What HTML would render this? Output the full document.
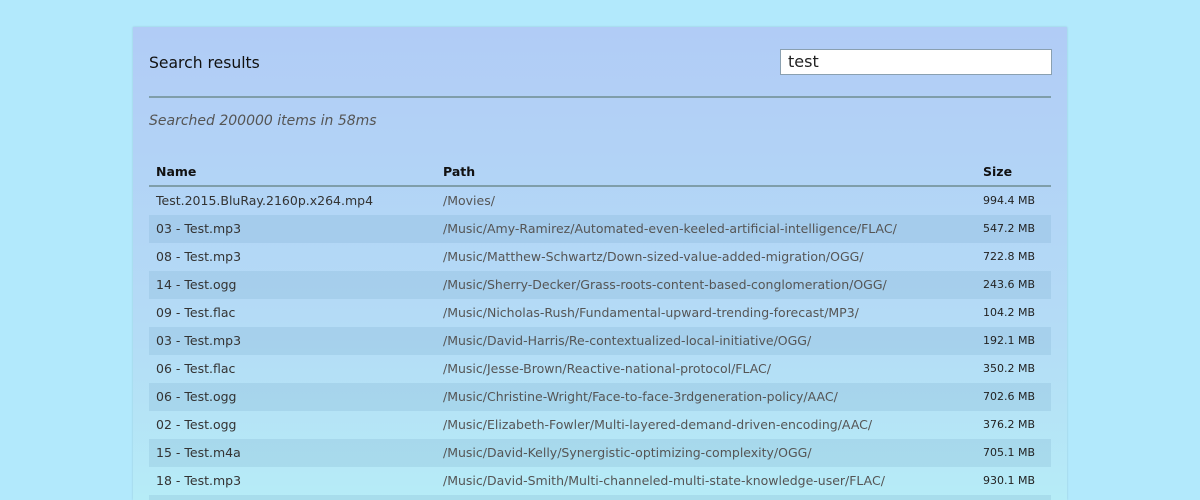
<!DOCTYPE html>
<html><head><style>
html,body{margin:0;padding:0;width:1200px;height:500px;overflow:hidden;}
body{background:#b2e9fc;font-family:"DejaVu Sans","Liberation Sans",sans-serif;color:#222;position:relative;}
.panel{position:absolute;left:133px;top:27px;width:934px;height:473px;background:linear-gradient(180deg,#b1ccf6 0%,#b4dcf6 65%,#b6ecf7 100%);box-shadow:0 0 2px rgba(0,0,0,.15);overflow:hidden;}
.title{position:absolute;left:16px;top:27px;font-size:15.6px;color:#111;}
.inp{position:absolute;left:647px;top:22px;background:#fff;border:1px solid #8aa0b0;font-size:16px;line-height:24px;padding-left:7px;box-sizing:border-box;width:272px;height:26px;}
.hr{position:absolute;left:16px;top:69px;width:902px;height:2px;background:#7f9eaa;}
.stat{position:absolute;left:16px;top:86px;font-size:14px;font-style:italic;color:#555;}
table{position:absolute;left:16px;top:130px;width:902px;border-collapse:collapse;font-size:12.5px;table-layout:fixed;}
th{text-align:left;font-weight:bold;height:27px;line-height:27px;padding:1px 0 0 7px;border-bottom:2px solid #7f9eaa;color:#111;box-sizing:border-box;}
td{height:28px;line-height:28px;padding:0 0 0 7px;color:#333;box-sizing:border-box;white-space:nowrap;overflow:hidden;}
td.p{color:#555;}
td.s{font-size:11px;color:#222;}
tr.d td{background:rgba(120,170,200,.22);}
</style></head><body>
<div class="panel">
<div class="title">Search results</div>
<div class="inp">test</div>
<div class="hr"></div>
<div class="stat">Searched 200000 items in 58ms</div>
<table>
<colgroup><col style="width:287px"><col style="width:540px"><col style="width:75px"></colgroup>
<tr><th>Name</th><th>Path</th><th>Size</th></tr>
<tr><td>Test.2015.BluRay.2160p.x264.mp4</td><td class="p">/Movies/</td><td class="s">994.4 MB</td></tr>
<tr class="d"><td>03 - Test.mp3</td><td class="p">/Music/Amy-Ramirez/Automated-even-keeled-artificial-intelligence/FLAC/</td><td class="s">547.2 MB</td></tr>
<tr><td>08 - Test.mp3</td><td class="p">/Music/Matthew-Schwartz/Down-sized-value-added-migration/OGG/</td><td class="s">722.8 MB</td></tr>
<tr class="d"><td>14 - Test.ogg</td><td class="p">/Music/Sherry-Decker/Grass-roots-content-based-conglomeration/OGG/</td><td class="s">243.6 MB</td></tr>
<tr><td>09 - Test.flac</td><td class="p">/Music/Nicholas-Rush/Fundamental-upward-trending-forecast/MP3/</td><td class="s">104.2 MB</td></tr>
<tr class="d"><td>03 - Test.mp3</td><td class="p">/Music/David-Harris/Re-contextualized-local-initiative/OGG/</td><td class="s">192.1 MB</td></tr>
<tr><td>06 - Test.flac</td><td class="p">/Music/Jesse-Brown/Reactive-national-protocol/FLAC/</td><td class="s">350.2 MB</td></tr>
<tr class="d"><td>06 - Test.ogg</td><td class="p">/Music/Christine-Wright/Face-to-face-3rdgeneration-policy/AAC/</td><td class="s">702.6 MB</td></tr>
<tr><td>02 - Test.ogg</td><td class="p">/Music/Elizabeth-Fowler/Multi-layered-demand-driven-encoding/AAC/</td><td class="s">376.2 MB</td></tr>
<tr class="d"><td>15 - Test.m4a</td><td class="p">/Music/David-Kelly/Synergistic-optimizing-complexity/OGG/</td><td class="s">705.1 MB</td></tr>
<tr><td>18 - Test.mp3</td><td class="p">/Music/David-Smith/Multi-channeled-multi-state-knowledge-user/FLAC/</td><td class="s">930.1 MB</td></tr>
<tr class="d"><td>&nbsp;</td><td></td><td></td></tr>
</table>
</div>
</body></html>
